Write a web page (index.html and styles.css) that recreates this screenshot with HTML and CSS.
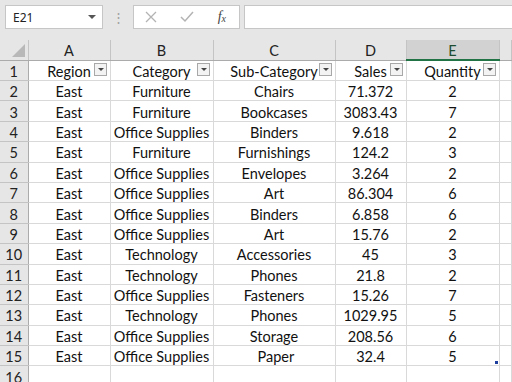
FILE: index.html
```html
<!DOCTYPE html>
<html lang="en">
<head>
    <meta charset="UTF-8">
    <title>Sheet</title>
    <link rel="stylesheet" href="styles.css">
</head>
<body>
    <div class="formula-bar">
        <div class="name-box">
            <span>E21</span>
            <span class="caret"></span>
        </div>
        <div class="dots">&#8942;</div>
        <div class="fx-box">
            <svg width="12" height="12" viewBox="0 0 12 12"><path d="M1 1 L11 11 M11 1 L1 11" stroke="#b3b3b3" stroke-width="1.3" fill="none"/></svg>
            <svg width="14" height="12" viewBox="0 0 14 12"><path d="M1 6 L5 10 L13 1" stroke="#b3b3b3" stroke-width="1.5" fill="none"/></svg>
            <span class="fx">f<sub>x</sub></span>
        </div>
        <div class="formula-input"></div>
    </div>

    <table class="sheet">
        <colgroup>
            <col class="c-row">
            <col class="c-a">
            <col class="c-b">
            <col class="c-c">
            <col class="c-d">
            <col class="c-e">
            <col>
        </colgroup>
        <thead>
            <tr>
                <th class="corner"><span class="tri"></span></th>
                <th>A</th>
                <th>B</th>
                <th>C</th>
                <th>D</th>
                <th class="selected">E</th>
                <th></th>
            </tr>
        </thead>
        <tbody>
            <tr>
                <th>1</th>
                <td class="hdr">Region<span class="filter"></span></td>
                <td class="hdr">Category<span class="filter"></span></td>
                <td class="hdr">Sub-Category<span class="filter"></span></td>
                <td class="hdr">Sales<span class="filter"></span></td>
                <td class="hdr">Quantity<span class="filter"></span></td>
                <td></td>
            </tr>
            <tr><th>2</th><td>East</td><td>Furniture</td><td>Chairs</td><td>71.372</td><td>2</td><td></td></tr>
            <tr><th>3</th><td>East</td><td>Furniture</td><td>Bookcases</td><td>3083.43</td><td>7</td><td></td></tr>
            <tr><th>4</th><td>East</td><td>Office Supplies</td><td>Binders</td><td>9.618</td><td>2</td><td></td></tr>
            <tr><th>5</th><td>East</td><td>Furniture</td><td>Furnishings</td><td>124.2</td><td>3</td><td></td></tr>
            <tr><th>6</th><td>East</td><td>Office Supplies</td><td>Envelopes</td><td>3.264</td><td>2</td><td></td></tr>
            <tr><th>7</th><td>East</td><td>Office Supplies</td><td>Art</td><td>86.304</td><td>6</td><td></td></tr>
            <tr><th>8</th><td>East</td><td>Office Supplies</td><td>Binders</td><td>6.858</td><td>6</td><td></td></tr>
            <tr><th>9</th><td>East</td><td>Office Supplies</td><td>Art</td><td>15.76</td><td>2</td><td></td></tr>
            <tr><th>10</th><td>East</td><td>Technology</td><td>Accessories</td><td>45</td><td>3</td><td></td></tr>
            <tr><th>11</th><td>East</td><td>Technology</td><td>Phones</td><td>21.8</td><td>2</td><td></td></tr>
            <tr><th>12</th><td>East</td><td>Office Supplies</td><td>Fasteners</td><td>15.26</td><td>7</td><td></td></tr>
            <tr><th>13</th><td>East</td><td>Technology</td><td>Phones</td><td>1029.95</td><td>5</td><td></td></tr>
            <tr><th>14</th><td>East</td><td>Office Supplies</td><td>Storage</td><td>208.56</td><td>6</td><td></td></tr>
            <tr><th>15</th><td>East</td><td>Office Supplies</td><td>&nbsp;Paper</td><td>32.4</td><td class="last">5<span class="handle"></span></td><td></td></tr>
            <tr><th>16</th><td></td><td></td><td></td><td></td><td></td><td></td></tr>
        </tbody>
    </table>
</body>
</html>
```

FILE: styles.css
```css
body {
    margin: 0;
    background-color: #ffffff;
    font-family: Lato, "Open Sans", sans-serif;
    overflow: hidden;
    width: 512px;
    height: 382px;
}

/* formula bar */
.formula-bar {
    display: flex;
    align-items: center;
    height: 40px;
    background-color: #e6e6e6;
    padding: 0 0 0 5px;
    box-sizing: border-box;
}

.name-box {
    width: 98px;
    height: 24px;
    margin-top: -6px;
    background-color: #ffffff;
    border: 1px solid #c6c6c6;
    box-sizing: border-box;
    display: flex;
    align-items: center;
    justify-content: space-between;
    padding: 0 6px 0 7px;
    font-family: "Noto Sans", sans-serif;
    font-size: 12px;
    color: #222;
}

.caret {
    width: 0;
    height: 0;
    border-left: 4px solid transparent;
    border-right: 4px solid transparent;
    border-top: 4px solid #555;
}

.dots {
    width: 30px;
    margin-top: -6px;
    text-align: center;
    color: #a0a0a0;
    font-size: 13px;
}

.fx-box {
    width: 107px;
    height: 24px;
    margin-top: -6px;
    background-color: #ffffff;
    border: 1px solid #c6c6c6;
    box-sizing: border-box;
    display: flex;
    align-items: center;
    justify-content: space-between;
    padding: 0 13px 0 11px;
}

.fx {
    font-family: "Liberation Serif", serif;
    font-style: italic;
    font-size: 14px;
    color: #444;
}

.fx sub {
    font-size: 10px;
    vertical-align: -1px;
}

.formula-input {
    flex: 1;
    height: 24px;
    margin: -6px 0 0 4px;
    background-color: #ffffff;
    border: 1px solid #c6c6c6;
    border-right: none;
    box-sizing: border-box;
}

/* grid */
.sheet {
    border-collapse: collapse;
    table-layout: fixed;
    width: 512px;
    font-size: 14.5px;
    color: #111;
}

.c-row { width: 28px; }
.c-a { width: 82px; }
.c-b { width: 103px; }
.c-c { width: 122px; }
.c-d { width: 71px; }
.c-e { width: 93px; }

.sheet thead th {
    height: 18px;
    padding: 1px 0 0;
    background-color: #e6e6e6;
    border-right: 1px solid #c4c4c4;
    border-bottom: 1px solid #ababab;
    font-weight: normal;
    font-size: 14.5px;
    color: #222;
}

.sheet thead th.selected {
    background-color: #d2d2d2;
    border-bottom: 2px solid #217346;
    color: #1d4b30;
}

.sheet th.corner {
    position: relative;
}

.tri {
    position: absolute;
    right: 3px;
    bottom: 3px;
    width: 0;
    height: 0;
    border-left: 13px solid transparent;
    border-bottom: 13px solid #b8b8b8;
}

.sheet tbody th {
    height: 17.4px;
    padding: 2px 0 0;
    background-color: #e6e6e6;
    border-right: 1px solid #ababab;
    border-bottom: 1px solid #c4c4c4;
    font-weight: normal;
    color: #222;
    text-align: center;
}

.sheet td {
    padding: 2px 0 0;
    border: 1px solid #d9d9d9;
    border-top: none;
    text-align: center;
    white-space: nowrap;
    overflow: hidden;
}

.sheet td.hdr {
    position: relative;
}

.filter {
    position: absolute;
    right: 3px;
    top: 2px;
    width: 13px;
    height: 13px;
    background-color: #f3f3f3;
    border: 1px solid #a8a8a8;
    box-sizing: border-box;
}

.filter::after {
    content: "";
    position: absolute;
    left: 3px;
    top: 4px;
    border-left: 3px solid transparent;
    border-right: 3px solid transparent;
    border-top: 3px solid #444;
}

.sheet td.last {
    position: relative;
    overflow: visible;
}

.handle {
    position: absolute;
    right: 1px;
    bottom: 1px;
    width: 3px;
    height: 3px;
    background-color: #1f3f9f;
}
```
